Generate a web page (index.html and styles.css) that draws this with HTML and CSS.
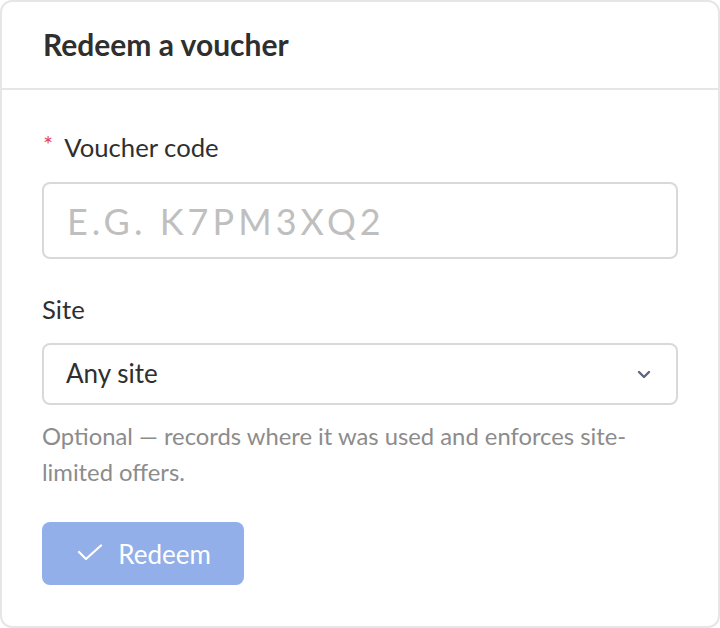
FILE: index.html
```html
<!DOCTYPE html>
<html>
<head>
<meta charset="utf-8">
<link rel="stylesheet" href="styles.css">
</head>
<body>
<div class="card">
  <div class="card-header">
    <h2 class="title">Redeem a voucher</h2>
  </div>
  <div class="card-body">
    <div class="field">
      <label class="label"><span class="req">*</span>Voucher code</label>
      <div class="input"><span class="placeholder">E.G. K7PM3XQ2</span></div>
    </div>
    <div class="field field-site">
      <label class="label">Site</label>
      <div class="select">
        <span class="select-value">Any site</span>
        <svg class="chevron" width="14" height="9" viewBox="0 0 14 9"><path d="M2 2 L7 7 L12 2" fill="none" stroke="#5c6682" stroke-width="2.4" stroke-linecap="round" stroke-linejoin="round"/></svg>
      </div>
      <p class="help">Optional — records where it was used and enforces site-limited offers.</p>
    </div>
    <button class="btn">
      <svg class="check" width="26" height="18" viewBox="0 0 26 18"><path d="M2 8 L9 15 L24 1.5" fill="none" stroke="#ffffff" stroke-width="2.2" stroke-linecap="round" stroke-linejoin="round"/></svg>
      <span>Redeem</span>
    </button>
  </div>
</div>
</body>
</html>
```
FILE: styles.css
```css
html, body {
  margin: 0;
  padding: 0;
  background: #ffffff;
}
body {
  font-family: Lato, "Noto Sans", sans-serif;
  color: #333333;
}
.card {
  box-sizing: border-box;
  width: 720px;
  height: 628px;
  border: 2px solid #e6e6e6;
  border-radius: 12px;
  background: #ffffff;
}
.card-header {
  box-sizing: border-box;
  height: 88px;
  border-bottom: 2px solid #e6e6e6;
  padding: 0 41px;
  display: flex;
  align-items: center;
}
.title {
  margin: 0;
  font-size: 30px;
  font-weight: 700;
  color: #2f2f2f;
  line-height: 36px;
  padding-bottom: 3px;
}
.card-body {
  padding: 39px 40px 0 40px;
}
.label {
  display: flex;
  align-items: center;
  font-size: 25.7px;
  line-height: 36px;
  color: #2f2f2f;
}
.req {
  color: #e5484d;
  font-size: 24px;
  margin-right: 11px;
  margin-left: 1px;
  position: relative;
  top: -3px;
}
.input {
  box-sizing: border-box;
  margin-top: 17px;
  height: 77px;
  border: 2px solid #d9d9d9;
  border-radius: 8px;
  display: flex;
  align-items: center;
  padding: 0 23px;
}
.placeholder {
  font-size: 36px;
  letter-spacing: 4.05px;
  color: #bfbfbf;
}
.field-site {
  margin-top: 32px;
}
.select {
  box-sizing: border-box;
  margin-top: 16px;
  height: 62px;
  border: 2px solid #d9d9d9;
  border-radius: 8px;
  display: flex;
  align-items: center;
  justify-content: space-between;
  padding: 0 25px 0 22px;
}
.select-value {
  font-size: 26px;
  color: #2f2f2f;
  padding-bottom: 2px;
}
.help {
  margin: 13px 0 0 0;
  font-size: 23.8px;
  line-height: 36px;
  color: #8c8c8c;
}
.btn {
  margin-top: 32px;
  box-sizing: border-box;
  width: 202px;
  height: 63px;
  border: none;
  border-radius: 8px;
  background: #93afe9;
  color: #ffffff;
  font-family: Lato, "Noto Sans", sans-serif;
  font-size: 26px;
  display: flex;
  align-items: center;
  justify-content: center;
  gap: 15px;
  padding: 0 0 0 2px;
}
.check {
  display: block;
  margin-top: -1px;
}
```
